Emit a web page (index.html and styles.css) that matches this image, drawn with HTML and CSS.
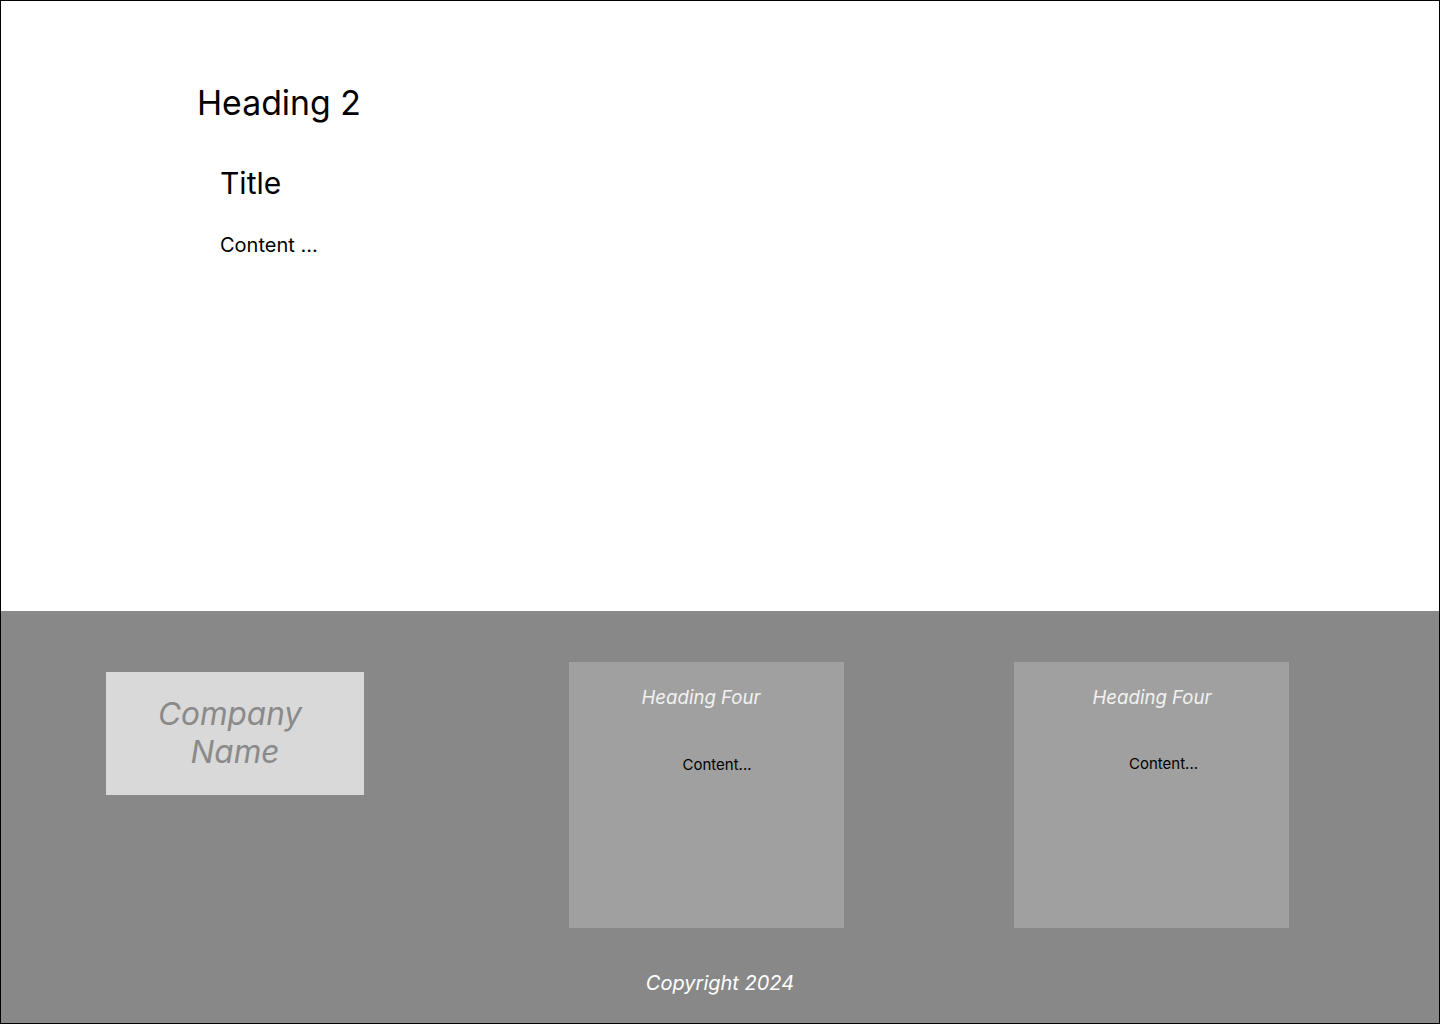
FILE: index.html
```html
<!DOCTYPE html>
<html lang="en">
<head>
<meta charset="utf-8">
<title>Page</title>
<link rel="stylesheet" href="styles.css">
</head>
<body>
<div class="page">
  <main class="main">
    <h2 class="heading">Heading 2</h2>
    <section class="article">
      <h3 class="title">Title</h3>
      <p class="content">Content ...</p>
    </section>
  </main>
  <footer class="footer">
    <div class="footer-row">
      <div class="logo"><span class="logo-first">Company</span><br>Name</div>
      <div class="card card-a">
        <h4 class="card-heading">Heading Four</h4>
        <p class="card-content">Content...</p>
      </div>
      <div class="card card-b">
        <h4 class="card-heading">Heading Four</h4>
        <p class="card-content">Content...</p>
      </div>
    </div>
    <p class="copyright">Copyright 2024</p>
  </footer>
</div>
</body>
</html>
```
FILE: styles.css
```css
* { box-sizing: border-box; }
html, body { margin: 0; padding: 0; }
body {
  font-family: Inter, "Noto Sans", sans-serif;
  background: #fff;
  color: #000;
}
.page {
  width: 1440px;
  height: 1024px;
  border: 1px solid #000;
  display: flex;
  flex-direction: column;
}
.main {
  height: 610px;
  padding: 80px 0 0 196px;
}
.heading {
  margin: 0;
  font-size: 33.8px;
  font-weight: 400;
  line-height: 44px;
}
.article {
  padding: 40px 0 0 23px;
}
.title {
  margin: 0;
  font-size: 30px;
  font-weight: 400;
  line-height: 36px;
}
.content {
  margin: 32px 0 0;
  font-size: 20px;
  line-height: 24px;
}
.footer {
  flex: 1;
  background: #888888;
  display: flex;
  flex-direction: column;
  padding-top: 51px;
}
.footer-row {
  display: flex;
  align-items: flex-start;
  padding-left: 105px;
}
.logo {
  margin-top: 10px;
  width: 258px;
  height: 123px;
  background: #d9d9d9;
  color: #8a8a8a;
  font-style: italic;
  font-size: 31.5px;
  line-height: 38px;
  text-align: center;
  padding-top: 23px;
}
.logo-first {
  display: inline-block;
  padding-right: 10px;
}
.card {
  width: 275px;
  height: 266px;
  background: #a0a0a0;
  text-align: center;
}
.card-a { margin-left: 205px; }
.card-b { margin-left: 170px; }
.card-heading {
  margin: 0;
  padding-top: 24px;
  font-size: 18.6px;
  font-style: italic;
  font-weight: 400;
  line-height: 22px;
  color: #f2f2f2;
}
.card-a .card-heading { padding-right: 11px; }
.card-b .card-heading { padding-left: 1px; }
.card-content {
  margin: 0;
  padding-top: 48px;
  font-size: 15px;
  line-height: 18px;
  color: #000;
}
.card-a .card-content { padding-left: 21px; }
.card-b .card-content { padding-left: 24px; padding-top: 47px; }
.copyright {
  margin: 43px 0 0;
  text-align: center;
  font-style: italic;
  font-size: 20px;
  line-height: 24px;
  color: #fff;
}
```
